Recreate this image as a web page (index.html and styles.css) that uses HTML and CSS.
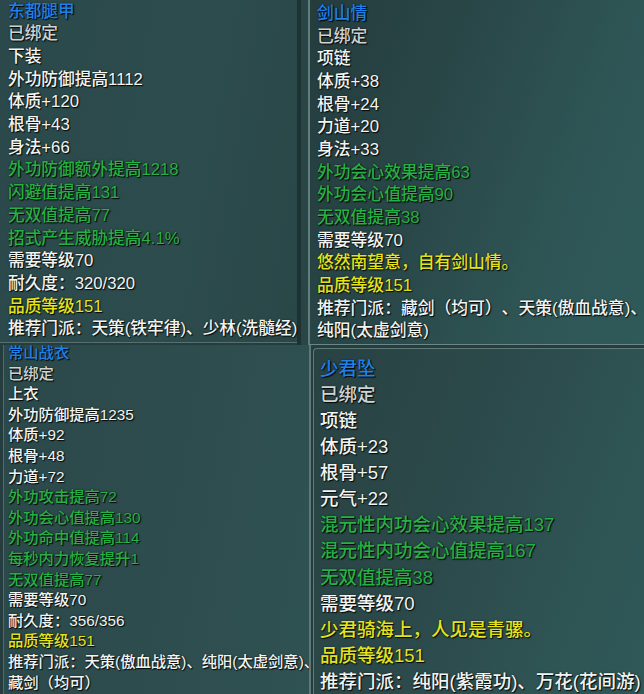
FILE: index.html
```html
<!DOCTYPE html>
<html lang="zh">
<head>
<meta charset="utf-8">
<title>装备</title>
<link rel="stylesheet" href="styles.css">
</head>
<body>
<div class="page">
  <div class="row row-top">
    <div class="panel tl">
      <div class="ln blue">东都腿甲</div>
      <div class="ln gray">已绑定</div>
      <div class="ln">下装</div>
      <div class="ln">外功防御提高1112</div>
      <div class="ln">体质+120</div>
      <div class="ln">根骨+43</div>
      <div class="ln">身法+66</div>
      <div class="ln green">外功防御额外提高1218</div>
      <div class="ln green">闪避值提高131</div>
      <div class="ln green">无双值提高77</div>
      <div class="ln green">招式产生威胁提高4.1%</div>
      <div class="ln">需要等级70</div>
      <div class="ln">耐久度：320/320</div>
      <div class="ln yellow">品质等级151</div>
      <div class="ln">推荐门派：天策(铁牢律)、少林(洗髓经)</div>
    </div>
    <div class="divider"></div>
    <div class="panel tr">
      <div class="ln blue">剑山情</div>
      <div class="ln gray">已绑定</div>
      <div class="ln">项链</div>
      <div class="ln">体质+38</div>
      <div class="ln">根骨+24</div>
      <div class="ln">力道+20</div>
      <div class="ln">身法+33</div>
      <div class="ln green">外功会心效果提高63</div>
      <div class="ln green">外功会心值提高90</div>
      <div class="ln green">无双值提高38</div>
      <div class="ln">需要等级70</div>
      <div class="ln yellow">悠然南望意，自有剑山情。</div>
      <div class="ln yellow">品质等级151</div>
      <div class="ln">推荐门派：藏剑（均可）、天策(傲血战意)、</div>
      <div class="ln">纯阳(太虚剑意)</div>
    </div>
  </div>
  <div class="row row-bottom">
    <div class="panel bl">
      <div class="ln blue first">常山战衣</div>
      <div class="ln gray">已绑定</div>
      <div class="ln">上衣</div>
      <div class="ln">外功防御提高1235</div>
      <div class="ln">体质+92</div>
      <div class="ln">根骨+48</div>
      <div class="ln">力道+72</div>
      <div class="ln green">外功攻击提高72</div>
      <div class="ln green">外功会心值提高130</div>
      <div class="ln green">外功命中值提高114</div>
      <div class="ln green">每秒内力恢复提升1</div>
      <div class="ln green">无双值提高77</div>
      <div class="ln">需要等级70</div>
      <div class="ln">耐久度：356/356</div>
      <div class="ln yellow">品质等级151</div>
      <div class="ln">推荐门派：天策(傲血战意)、纯阳(太虚剑意)、</div>
      <div class="ln">藏剑（均可）</div>
    </div>
    <div class="panel br">
      <div class="ln blue">少君坠</div>
      <div class="ln gray">已绑定</div>
      <div class="ln">项链</div>
      <div class="ln">体质+23</div>
      <div class="ln">根骨+57</div>
      <div class="ln">元气+22</div>
      <div class="ln green">混元性内功会心效果提高137</div>
      <div class="ln green">混元性内功会心值提高167</div>
      <div class="ln green">无双值提高38</div>
      <div class="ln">需要等级70</div>
      <div class="ln yellow">少君骑海上，人见是青骡。</div>
      <div class="ln yellow">品质等级151</div>
      <div class="ln">推荐门派：纯阳(紫霞功)、万花(花间游)</div>
    </div>
  </div>
</div>
</body>
</html>
```

FILE: styles.css
```css
html, body {
  margin: 0;
  padding: 0;
  background: #253d3e;
}
.page {
  width: 644px;
  height: 694px;
  overflow: hidden;
  display: flex;
  flex-direction: column;
  font-family: "Liberation Sans", "Noto Sans CJK SC", sans-serif;
  font-weight: 500;
  color: #f2f4f2;
  text-spacing-trim: space-all;
}
.row {
  display: flex;
}
.row-top {
  height: 345px;
}
.row-bottom {
  flex: 1;
  min-height: 0;
}
.panel {
  box-sizing: border-box;
  white-space: nowrap;
}
.ln {
  text-shadow: 1px 1px 1px rgba(0, 0, 0, 0.9), 0 0 2px rgba(0, 0, 0, 0.55);
}
.blue { color: #1f80ea; }
.gray { color: #cfd3d1; }
.green { color: #27b043; }
.yellow { color: #e4e31e; }

.tl {
  width: 297px;
  height: 343px;
  background: linear-gradient(100deg, #2b494a 0%, #2d4c4d 60%, #2a4748 100%);
  border-bottom: 1px solid #56706f;
  padding: 0.5px 0 0 8px;
  font-size: 16.7px;
  line-height: 22.7px;
  position: relative;
  z-index: 1;
}
.divider {
  width: 11px;
  background: linear-gradient(90deg, #1c3233 0%, #1c3233 35%, #2a4545 36%, #2a4545 100%);
}
.tr {
  flex: 1;
  min-width: 0;
  overflow: hidden;
  border-left: 2px solid #627e7c;
  border-bottom: 1px solid #6b8684;
  background: linear-gradient(110deg, #253c3d 0%, #2a4849 40%, #2f5656 75%, #2f5a5a 100%);
  padding: 3px 0 0 7px;
  font-size: 16.8px;
  line-height: 22.66px;
}
.bl {
  width: 308px;
  margin-left: 3px;
  border-left: 1px solid #4f6b6a;
  border-right: 2px solid #5d7977;
  background: linear-gradient(100deg, #2c494a 0%, #2e4d4e 60%, #2f5253 100%);
  overflow: hidden;
  padding: 0 0 0 4px;
  font-size: 15.3px;
  line-height: 20.6px;
}
.bl .first {
  margin-top: -2px;
}
.br {
  flex: 1;
  min-width: 0;
  margin: 3px 0 0 2px;
  border: 1px solid #5f7b79;
  border-right: none;
  border-bottom: none;
  border-top-left-radius: 4px;
  background: linear-gradient(110deg, #294243 0%, #2c4a4b 45%, #2f5555 80%, #2f5858 100%);
  overflow: hidden;
  padding: 7px 0 0 6px;
  font-size: 18.5px;
  line-height: 26.06px;
}
```
